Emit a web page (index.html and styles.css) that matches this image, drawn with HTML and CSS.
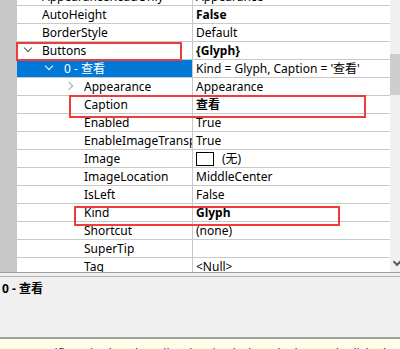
FILE: index.html
```html
<!DOCTYPE html>
<html lang="en">
<head>
    <meta charset="UTF-8">
    <meta name="viewport" content="width=device-width, initial-scale=1.0">
    <title>Property Grid</title>
    <link rel="stylesheet" href="styles.css">
</head>
<body>
    <div class="window">
        <div class="grid">
            <div class="rows">
                <div class="list">
                    <div class="row"><div class="gutter"></div><div class="name lv0"><span class="arrow closed"></span><span class="label">AppearanceReadOnly</span></div><div class="value">Appearance</div></div>
                    <div class="row"><div class="gutter"></div><div class="name lv0"><span class="label">AutoHeight</span></div><div class="value bold">False</div></div>
                    <div class="row"><div class="gutter"></div><div class="name lv0"><span class="label">BorderStyle</span></div><div class="value">Default</div></div>
                    <div class="row"><div class="gutter"></div><div class="name lv0"><span class="arrow open"></span><span class="label">Buttons</span></div><div class="value bold">{Glyph}</div></div>
                    <div class="row selected"><div class="gutter"></div><div class="name lv1"><span class="arrow open"></span><span class="label">0 - 查看</span></div><div class="value">Kind = Glyph, Caption = '查看'</div></div>
                    <div class="row"><div class="gutter"></div><div class="name lv2"><span class="arrow closed"></span><span class="label">Appearance</span></div><div class="value">Appearance</div></div>
                    <div class="row"><div class="gutter"></div><div class="name lv2"><span class="label">Caption</span></div><div class="value bold">查看</div></div>
                    <div class="row"><div class="gutter"></div><div class="name lv2"><span class="label">Enabled</span></div><div class="value">True</div></div>
                    <div class="row"><div class="gutter"></div><div class="name lv2"><span class="label">EnableImageTransparency</span></div><div class="value">True</div></div>
                    <div class="row"><div class="gutter"></div><div class="name lv2"><span class="label">Image</span></div><div class="value"><span class="img-box"></span>(无)</div></div>
                    <div class="row"><div class="gutter"></div><div class="name lv2"><span class="label">ImageLocation</span></div><div class="value">MiddleCenter</div></div>
                    <div class="row"><div class="gutter"></div><div class="name lv2"><span class="label">IsLeft</span></div><div class="value">False</div></div>
                    <div class="row"><div class="gutter"></div><div class="name lv2"><span class="label">Kind</span></div><div class="value bold">Glyph</div></div>
                    <div class="row"><div class="gutter"></div><div class="name lv2"><span class="label">Shortcut</span></div><div class="value">(none)</div></div>
                    <div class="row"><div class="gutter"></div><div class="name lv2"><span class="label">SuperTip</span></div><div class="value"></div></div>
                    <div class="row"><div class="gutter"></div><div class="name lv2"><span class="label">Tag</span></div><div class="value">&lt;Null&gt;</div></div>
                </div>

                <!-- annotation boxes drawn on top of the grid -->
                <div class="mark mark-buttons"></div>
                <div class="mark mark-caption"></div>
                <div class="mark mark-kind"></div>
            </div>
            <div class="scrollbar">
                <div class="thumb"></div>
                <span class="scroll-down"></span>
            </div>
        </div>
        <div class="splitter"></div>
        <div class="desc">
            <div class="desc-title">0 - 查看</div>
        </div>
        <div class="hint">Specifies whether the editor is raised when the button is clicked and the text is selected.</div>
    </div>
</body>
</html>
```

FILE: styles.css
```css
body {
    margin: 0;
    padding: 0;
    background-color: #ffffff;
    font-family: "Noto Sans", "Noto Sans CJK SC", sans-serif;
    font-size: 12px;
    color: #000;
}
.window {
    width: 400px;
    height: 349px;
    overflow: hidden;
    display: flex;
    flex-direction: column;
}
.grid {
    height: 272px;
    display: flex;
    flex-shrink: 0;
}
.rows {
    flex: 1;
    position: relative;
    overflow: hidden;
}
.list {
    margin-top: -12px;
}
.row {
    display: grid;
    grid-template-columns: 17px 175px 1fr;
    height: 18px;
}
.gutter {
    background-color: #c8c8c8;
}
.name,
.value {
    display: flex;
    align-items: center;
    border-bottom: 1px solid #c8c8c8;
    white-space: nowrap;
    overflow: hidden;
    line-height: 17px;
    min-width: 0;
}
.label {
    overflow: hidden;
    min-width: 0;
}
.value {
    border-left: 1px solid #c8c8c8;
    padding-left: 3px;
}
.bold {
    font-weight: 700;
}
.lv0 { padding-left: 25px; }
.lv1 { padding-left: 47px; }
.lv2 { padding-left: 67px; }
.name {
    position: relative;
}
.arrow {
    position: absolute;
    top: 6px;
    width: 5px;
    height: 5px;
    border-right: 1.5px solid #5a5a5a;
    border-bottom: 1.5px solid #5a5a5a;
}
.arrow.open {
    transform: rotate(45deg);
    top: 3px;
}
.lv0 .arrow { left: 8px; }
.lv1 .arrow { left: 29px; }
.lv2 .arrow { left: 49px; }
.arrow.closed {
    transform: rotate(-45deg);
    border-color: #a8a8a8;
    top: 5px;
}
.lv0 .arrow.closed {
    left: 4px;
}
.selected .name {
    background-color: #0078d7;
    color: #fff;
}
.selected .arrow {
    border-color: #fff;
}
.img-box {
    display: inline-block;
    width: 16px;
    height: 12px;
    border: 1px solid #000;
    background: #fff;
    margin-right: 8px;
}
.mark {
    position: absolute;
    border: 2px solid #ee3b3b;
}
.mark-buttons {
    left: 16px;
    top: 42px;
    width: 162px;
    height: 15px;
}
.mark-caption {
    left: 69px;
    top: 95px;
    width: 293px;
    height: 19px;
}
.mark-kind {
    left: 74px;
    top: 206px;
    width: 262px;
    height: 16px;
}
.scrollbar {
    width: 10px;
    background-color: #f0f0f0;
    position: relative;
}
.thumb {
    position: absolute;
    top: 54px;
    left: 0;
    width: 10px;
    height: 41px;
    background-color: #cdcdcd;
}
.scroll-down {
    position: absolute;
    top: 259px;
    left: 4px;
    width: 4px;
    height: 4px;
    border-right: 2px solid #606060;
    border-bottom: 2px solid #606060;
    transform: rotate(45deg);
}
.splitter {
    height: 3px;
    background-color: #f0f0f0;
    border-top: 1px solid #a0a0a0;
    border-bottom: 1px solid #b4b4b4;
    flex-shrink: 0;
}
.desc {
    height: 56px;
    background-color: #f0f0f0;
    border-bottom: 2px solid #a0a0a0;
    padding: 4px 2px 0;
    flex-shrink: 0;
}
.desc-title {
    font-weight: 700;
    line-height: 16px;
}
.hint {
    flex: 1;
    background-color: #fffde6;
    color: #2a2a6a;
    padding: 7px 0 0 28px;
    white-space: nowrap;
    line-height: 16px;
}
```
